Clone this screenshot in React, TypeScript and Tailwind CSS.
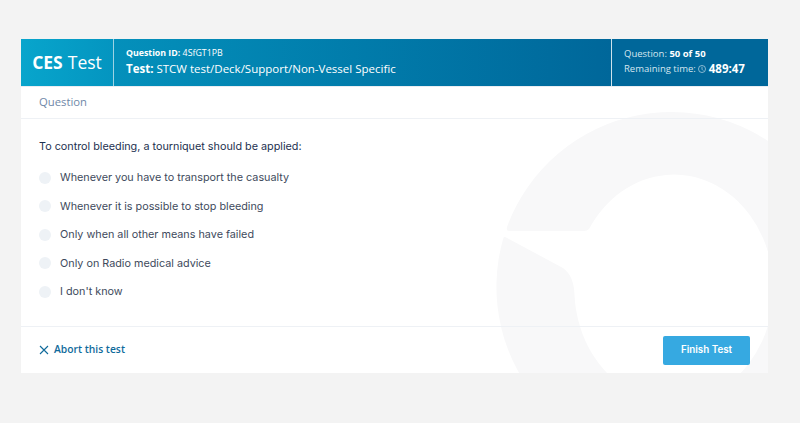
const answers = [
  "Whenever you have to transport the casualty",
  "Whenever it is possible to stop bleeding",
  "Only when all other means have failed",
  "Only on Radio medical advice",
  "I don't know",
];

// Faint logo mark behind the question, coordinates are page pixels
function Watermark() {
  return (
    <svg
      className="pointer-events-none absolute inset-0 h-full w-full"
      viewBox="21 39 747 334"
      aria-hidden="true"
    >
      <path
        fill="#f8f8f9"
        d="M509 231 Q506 231 507 227 A175 175 0 1 1 503.400 238 Q504 236 507 238 L563 268 Q574 276 574.500 295 A99.500 114 0 1 0 589 229 Q587 231 584 231 Z"
      />
    </svg>
  );
}

export default function App() {
  return (
    <div className="flex h-[423px] w-[800px] items-start bg-[#f3f3f3] pl-[21px] pt-[39px] font-['Inter',sans-serif]">
      <div className="relative flex h-[334px] w-[747px] flex-col overflow-hidden bg-white">
        <Watermark />

        <header className="relative flex h-[48px] shrink-0 border-b border-[#e9edf2] font-['Open_Sans',sans-serif] text-white">
          <div className="flex w-[93px] items-center justify-center border-r border-[#9fd3e3] bg-gradient-to-r from-[#08a5cc] to-[#0495c0] text-[17.500px]">
            <span className="font-bold">CES</span>
            <span className="ml-[5px]">Test</span>
          </div>
          <div className="flex flex-1 flex-col justify-center border-r border-[#cfe3ec] bg-gradient-to-r from-[#0490bb] to-[#00679a] pb-[1px] pl-[12px]">
            <div className="text-[8.800px] leading-[13px]">
              <span className="font-bold">Question ID:</span> 4SfGT1PB
            </div>
            <div className="text-[11.500px] leading-[17px]">
              <span className="font-bold">Test:</span> STCW test/Deck/Support/Non-Vessel Specific
            </div>
          </div>
          <div className="flex w-[156px] flex-col justify-center bg-[#00679a] pb-[1px] pl-[12px]">
            <div className="text-[9.500px] leading-[13px] text-[#d5e6ef]">
              Question: <span className="font-bold text-white">50 of 50</span>
            </div>
            <div className="flex items-center text-[9.500px] leading-[17px] text-[#d5e6ef]">
              Remaining time:
              <svg className="ml-[2px] h-[8px] w-[8px]" viewBox="0 0 10 10" fill="none" stroke="currentColor" strokeWidth="0.8">
                <circle cx="5" cy="5" r="4.400" />
                <path d="M5 2.300V5.300L6.600 7" />
              </svg>
              <span className="ml-[3px] text-[11.500px] font-bold text-white">489:47</span>
            </div>
          </div>
        </header>

        <div className="relative flex h-[32px] shrink-0 items-center border-b border-[#eef1f5] pl-[18px] font-['Open_Sans',sans-serif] text-[11.300px] text-[#6f88a8]">
          Question
        </div>

        <main className="relative flex-1 pl-[18px] pt-[20px]">
          <p className="text-[10.800px] leading-[16px] text-[#1d3150]">
            To control bleeding, a tourniquet should be applied:
          </p>
          <ul className="mt-[15.500px] flex flex-col gap-[12.500px]">
            {answers.map((a) => (
              <li key={a} className="flex h-[16px] items-center text-[10.800px] text-[#3e4a5c]">
                <span className="mb-[2px] mr-[9px] h-[12px] w-[12px] rounded-full bg-[#eef2f6]" />
                {a}
              </li>
            ))}
          </ul>
        </main>

        <footer className="relative flex h-[47px] shrink-0 items-center justify-between border-t border-[#eef1f5] pl-[18px] pr-[18px]">
          <button className="flex items-center font-['Open_Sans',sans-serif] text-[10.300px] font-semibold text-[#0f6a9b]">
            <svg className="mr-[5px] h-[10px] w-[10px]" viewBox="0 0 10 10" fill="none" stroke="currentColor" strokeWidth="1.100">
              <path d="M1 1L9 9M9 1L1 9" />
            </svg>
            Abort this test
          </button>
          <button className="h-[29px] w-[87px] rounded-[2px] bg-[#36a9e1] text-[9.800px] font-semibold text-white">
            Finish Test
          </button>
        </footer>
      </div>
    </div>
  );
}
